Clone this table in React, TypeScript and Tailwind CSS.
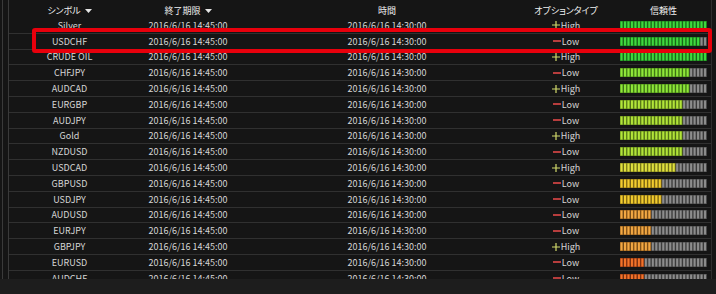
import React from "react";

type Row = { sym: string; type: "High" | "Low"; fill: number; tone: number };

const rows: Row[] = [
  { sym: "Silver", type: "High", fill: 25, tone: 0 },
  { sym: "USDCHF", type: "Low", fill: 23, tone: 0 },
  { sym: "CRUDE OIL", type: "High", fill: 25, tone: 0 },
  { sym: "CHFJPY", type: "Low", fill: 20, tone: 1 },
  { sym: "AUDCAD", type: "High", fill: 20, tone: 1 },
  { sym: "EURGBP", type: "Low", fill: 18, tone: 2 },
  { sym: "AUDJPY", type: "Low", fill: 18, tone: 2 },
  { sym: "Gold", type: "High", fill: 18, tone: 2 },
  { sym: "NZDUSD", type: "Low", fill: 18, tone: 2 },
  { sym: "USDCAD", type: "High", fill: 16, tone: 3 },
  { sym: "GBPUSD", type: "Low", fill: 12, tone: 4 },
  { sym: "USDJPY", type: "Low", fill: 12, tone: 4 },
  { sym: "AUDUSD", type: "Low", fill: 9, tone: 5 },
  { sym: "EURJPY", type: "Low", fill: 9, tone: 5 },
  { sym: "GBPJPY", type: "High", fill: 9, tone: 5 },
  { sym: "EURUSD", type: "Low", fill: 7, tone: 6 },
  { sym: "AUDCHF", type: "Low", fill: 7, tone: 6 },
];

// [bright stripe, dark gap]
const tones = [
  ["#3fd83f", "#1b7d1b"],
  ["#8fe63a", "#4a8a18"],
  ["#b2e43a", "#62861a"],
  ["#dfe040", "#86861c"],
  ["#f2cc30", "#8f7414"],
  ["#f2a844", "#8f5a1a"],
  ["#f2742a", "#8f3612"],
];

const SEGS = 25;

const Meter = ({ fill, tone }: { fill: number; tone: number }) => {
  const w = 87;
  const step = w / SEGS;
  const [on, gap] = tones[tone];
  return (
    <svg width={w} height="9" viewBox={`0 0 ${w} 9`} className="block">
      {Array.from({ length: SEGS }).map((_, i) => {
        const lit = i < fill;
        return (
          <g key={i}>
            <rect x={i * step} y="0" width={step} height="9" fill={lit ? gap : "#464646"} />
            <rect x={i * step + 0.5} y="0.5" width="2" height="8" fill={lit ? on : "#8c8c8c"} />
          </g>
        );
      })}
    </svg>
  );
};

const Arrow = () => (
  <svg width="7" height="4" viewBox="0 0 7 4" className="ml-[4px] inline-block">
    <path d="M0 0 H7 L3.5 4 Z" fill="#e6e6e6" />
  </svg>
);

const TypeCell = ({ type }: { type: "High" | "Low" }) => (
  <div className="flex items-center justify-center">
    <svg width="8" height="8" viewBox="0 0 8 8" className="mr-[1px]">
      {type === "High" ? (
        <path d="M0 4 H8 M4 0 V8" stroke="#d2da6c" strokeWidth="1.2" />
      ) : (
        <path d="M0 4 H8" stroke="#e04848" strokeWidth="1.6" />
      )}
    </svg>
    <span>{type}</span>
  </div>
);

const cols = "grid grid-cols-[121px_116px_282px_76px_108px]";

export default function App() {
  return (
    <div className="relative flex h-[294px] w-[716px] flex-col overflow-hidden bg-[#151515] font-['Noto_Sans_CJK_JP',sans-serif] text-[9px] text-[#d6d6d6]">
      <div className="flex h-[279px]">
        <div className="ml-[2px] w-[7px] border-x border-[#3a3a3a]" />
        <div className="w-[703px] border-r border-[#2e2e2e]">
          <div className={`${cols} h-[18px] items-center pt-[3px] text-[9px] text-[#f0f0f0] [font-feature-settings:'palt']`}>
            <div className="flex items-center justify-center">
              シンボル
              <Arrow />
            </div>
            <div className="flex items-center justify-center">
              終了期限
              <Arrow />
            </div>
            <div className="text-center">時間</div>
            <div className="text-center">オプションタイプ</div>
            <div className="pl-[16px]">
              <div className="w-[87px] text-center">信頼性</div>
            </div>
          </div>
          {rows.map((r) => (
            <div key={r.sym} className={`${cols} h-[15.8px] items-center border-b border-[#303030] leading-none`}>
              <div className="text-center">{r.sym}</div>
              <div className="text-center">2016/6/16 14:45:00</div>
              <div className="text-center">2016/6/16 14:30:00</div>
              <TypeCell type={r.type} />
              <div className="pl-[16px]">
                <Meter fill={r.fill} tone={r.tone} />
              </div>
            </div>
          ))}
        </div>
      </div>
      <div className="flex-1 bg-[#1d1d1d]" />
      <div className="absolute left-[32px] top-[28px] h-[25px] w-[680px] rounded-[3px] border-[4px] border-[#e8000c]" />
    </div>
  );
}
